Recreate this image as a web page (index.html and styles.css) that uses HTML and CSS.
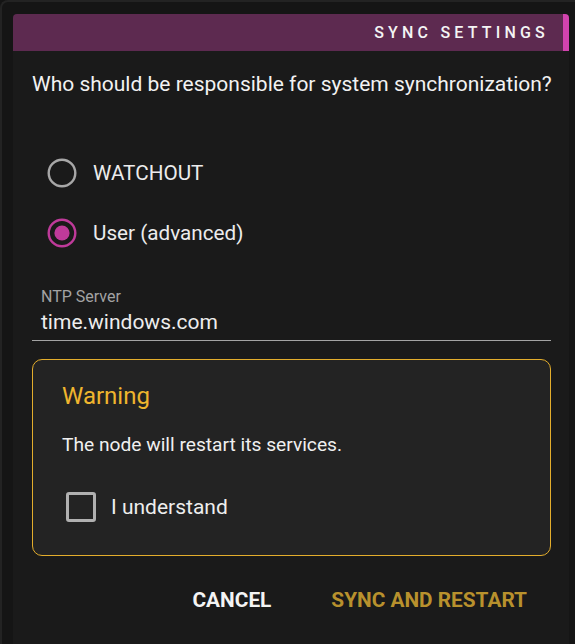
FILE: index.html
```html
<!DOCTYPE html>
<html lang="en">
<head>
<meta charset="utf-8">
<title>Sync Settings</title>
<link rel="stylesheet" href="styles.css">
</head>
<body>
<div class="frame">
  <div class="panel">
    <div class="header"><span class="title">SYNC SETTINGS</span></div>
    <div class="content">
      <p class="question">Who should be responsible for system synchronization?</p>
      <div class="radios">
        <label class="radio">
          <svg class="radio-icon" width="30" height="30" viewBox="0 0 30 30"><circle cx="15" cy="15" r="13.3" fill="none" stroke="#a7a7a7" stroke-width="2.4"/></svg>
          <span class="radio-label">WATCHOUT</span>
        </label>
        <label class="radio">
          <svg class="radio-icon" width="30" height="30" viewBox="0 0 30 30"><circle cx="15" cy="15" r="13.3" fill="none" stroke="#bf3a9a" stroke-width="2.4"/><circle cx="15" cy="15" r="7.6" fill="#bf3a9a"/></svg>
          <span class="radio-label">User (advanced)</span>
        </label>
      </div>
      <div class="field">
        <div class="field-label">NTP Server</div>
        <div class="field-value">time.windows.com</div>
      </div>
      <div class="warning">
        <div class="warning-title">Warning</div>
        <p class="warning-text">The node will restart its services.</p>
        <label class="check">
          <span class="check-box"></span>
          <span class="check-label">I understand</span>
        </label>
      </div>
      <div class="actions">
        <span class="btn btn-cancel">CANCEL</span>
        <span class="btn btn-primary">SYNC AND RESTART</span>
      </div>
    </div>
  </div>
</div>
</body>
</html>
```

FILE: styles.css
```css
html, body {
  margin: 0;
  padding: 0;
  background: #141414;
  font-family: Roboto, "Liberation Sans", sans-serif;
  color: #eeeeee;
  overflow: hidden;
}

.frame {
  height: 644px;
  box-sizing: border-box;
  border-left: 2px solid #232323;
  border-top: 2px solid #232323;
  border-top-left-radius: 8px;
  padding: 12px 0 0 11px;
  background: #151515;
}

.panel {
  width: 556px;
  height: 640px;
  background: #1a1a1a;
  border-radius: 4px 4px 0 0;
}

.header {
  height: 37px;
  box-sizing: border-box;
  background: #5d2a50;
  border-right: 6px solid #d243ae;
  border-radius: 4px 4px 0 0;
  display: flex;
  align-items: center;
  justify-content: flex-end;
  padding-right: 14px;
}

.title {
  font-size: 16px;
  font-weight: 500;
  letter-spacing: 4.2px;
  color: #f4f4f4;
  line-height: 20px;
}

.content {
  padding: 0 18px 0 19px;
}

.question {
  margin: 19px 0 0;
  font-size: 21px;
  line-height: 28px;
  color: #f2f2f2;
  white-space: nowrap;
}

.radios {
  margin-top: 45px;
  display: flex;
  flex-direction: column;
}

.radio {
  height: 60px;
  display: flex;
  align-items: center;
  gap: 16px;
  padding-left: 15px;
}

.radio-icon {
  flex: none;
  display: block;
}

.radio-label {
  font-size: 20.7px;
  line-height: 28px;
  color: #ececec;
}

.field {
  margin-top: 24px;
  border-bottom: 1px solid #a3a3a3;
  padding: 0 0 4px 9px;
}

.field-label {
  font-size: 16px;
  line-height: 20px;
  color: #a3a3a3;
}

.field-value {
  margin-top: 1px;
  font-size: 21px;
  line-height: 28px;
  color: #ededed;
}

.warning {
  margin-top: 18px;
  border: 1px solid #e3ad2c;
  border-radius: 10px;
  background: #232323;
  padding: 21px 20px 33px 29px;
}

.warning-title {
  font-size: 24px;
  line-height: 30px;
  color: #efb52e;
}

.warning-text {
  margin: 21px 0 0;
  font-size: 19.2px;
  line-height: 26px;
  color: #f0f0f0;
}

.check {
  margin-top: 34px;
  display: flex;
  align-items: center;
  gap: 15px;
  padding-left: 4px;
  height: 30px;
}

.check-box {
  width: 30px;
  height: 30px;
  box-sizing: border-box;
  border: 3px solid #b0b0b0;
  border-radius: 3px;
  flex: none;
}

.check-label {
  font-size: 21px;
  line-height: 28px;
  color: #eeeeee;
}

.actions {
  margin-top: 32px;
  display: flex;
  justify-content: flex-end;
  gap: 60px;
  padding-right: 24px;
}

.btn {
  font-size: 20.8px;
  font-weight: 700;
  line-height: 24px;
}

.btn-cancel {
  color: #f4f4f4;
}

.btn-primary {
  color: #b8912d;
}
```
